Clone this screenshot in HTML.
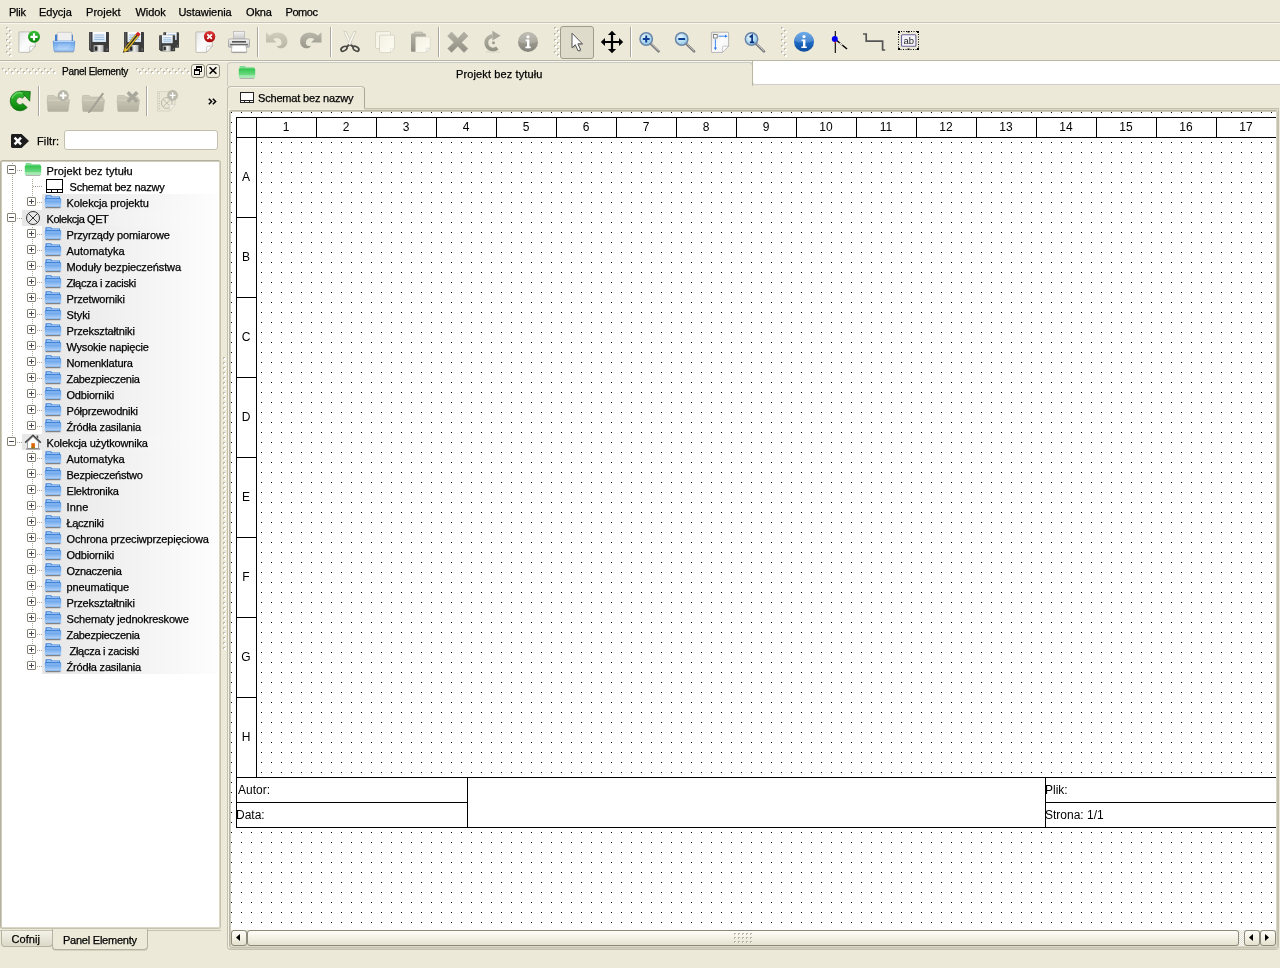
<!DOCTYPE html>
<html lang="pl"><head><meta charset="utf-8"><title>QElectroTech</title>
<style>
html,body{margin:0;padding:0}
body{will-change:transform;width:1280px;height:968px;overflow:hidden;background:#ECE9D8;position:relative;font-family:"Liberation Sans",sans-serif;font-size:11px;color:#000}
.a{position:absolute}
.t{position:absolute;white-space:pre;line-height:13px;height:13px;-webkit-text-stroke:.25px #000}
.hl{position:absolute;height:1px}
.vl{position:absolute;width:1px}
svg{position:absolute;overflow:visible}
.ic{position:absolute;width:22px;height:22px}
.grad{position:absolute;height:16px;background:linear-gradient(90deg,#E7E7E7,#FDFDFD)}
.exp{position:absolute;width:7px;height:7px;border:1px solid #858275;background:#fff;border-radius:1px}
.exp i{position:absolute;left:1px;top:3px;width:5px;height:1px;background:#4A4A4A}
.exp b{position:absolute;left:3px;top:1px;width:1px;height:5px;background:#4A4A4A}
.hd{position:absolute;height:1px;background-image:linear-gradient(90deg,#A8A594 1px,transparent 1px);background-size:2px 1px}
.vd{position:absolute;width:1px;background-image:linear-gradient(#A8A594 1px,transparent 1px);background-size:1px 2px}
.sep{position:absolute;width:1px;background:#ACA899;box-shadow:1px 0 0 #fff}
</style></head><body>
<div class="t" style="left:9px;top:6px;letter-spacing:-0.280px">Plik</div>
<div class="t" style="left:39px;top:6px;letter-spacing:-0.039px">Edycja</div>
<div class="t" style="left:86px;top:6px;letter-spacing:0.050px">Projekt</div>
<div class="t" style="left:135.5px;top:6px;letter-spacing:-0.093px">Widok</div>
<div class="t" style="left:178.5px;top:6px;letter-spacing:-0.071px">Ustawienia</div>
<div class="t" style="left:246px;top:6px;letter-spacing:-0.178px">Okna</div>
<div class="t" style="left:285.5px;top:6px;letter-spacing:-0.430px">Pomoc</div>
<div class="hl" style="left:0;top:22px;width:1280px;background:#C9C6B6"></div>
<div class="hl" style="left:0;top:23px;width:1280px;background:#F8F7F1"></div>
<div class="hl" style="left:0;top:60px;width:1280px;background:#B9B6A5"></div>
<div class="hl" style="left:0;top:61px;width:1280px;background:#F6F5EE"></div>
<svg style="left:6px;top:27px;width:6px;height:30px" shape-rendering="crispEdges"><rect width="6" height="30" fill="url(#hp)"/></svg>
<svg style="left:554px;top:27px;width:6px;height:30px" shape-rendering="crispEdges"><rect width="6" height="30" fill="url(#hp)"/></svg>
<svg style="left:781px;top:27px;width:6px;height:30px" shape-rendering="crispEdges"><rect width="6" height="30" fill="url(#hp)"/></svg>
<div class="sep" style="left:257px;top:27px;height:30px"></div>
<div class="sep" style="left:330px;top:27px;height:30px"></div>
<div class="sep" style="left:438px;top:27px;height:30px"></div>
<div class="sep" style="left:630px;top:27px;height:30px"></div>
<div class="a" style="left:560px;top:26px;width:32px;height:31px;border:1px solid #A09D8D;border-radius:3px;background:#DEDBCA"></div>
<svg width="0" height="0" style="left:0;top:0"><defs>
<linearGradient id="gpage" x1="0" y1="0" x2="1" y2="1"><stop offset="0" stop-color="#E4E4E4"/><stop offset=".5" stop-color="#FCFCFC"/><stop offset="1" stop-color="#F2F2F2"/></linearGradient>
<linearGradient id="ggreen" x1="0" y1="0" x2="0" y2="1"><stop offset="0" stop-color="#35C235"/><stop offset="1" stop-color="#078007"/></linearGradient>
<linearGradient id="gred" x1="0" y1="0" x2="0" y2="1"><stop offset="0" stop-color="#E03A3A"/><stop offset="1" stop-color="#A80808"/></linearGradient>
<linearGradient id="gblue" x1="0" y1="0" x2="0" y2="1"><stop offset="0" stop-color="#5E9BE6"/><stop offset=".75" stop-color="#A4CBF7"/><stop offset="1" stop-color="#85B6F0"/></linearGradient>
<linearGradient id="gfold" x1="0" y1="0" x2="0" y2="1"><stop offset="0" stop-color="#4C8FE3"/><stop offset=".8" stop-color="#A3CBF7"/><stop offset="1" stop-color="#82B4F0"/></linearGradient>
<linearGradient id="ggfold" x1="0" y1="0" x2="0" y2="1"><stop offset="0" stop-color="#2FC24B"/><stop offset=".7" stop-color="#6FDB85"/><stop offset=".75" stop-color="#A5E8B2"/><stop offset="1" stop-color="#A5E8B2"/></linearGradient>
<linearGradient id="gmetal" x1="0" y1="0" x2="1" y2="0"><stop offset="0" stop-color="#8C8C8C"/><stop offset=".6" stop-color="#E8E8E8"/><stop offset="1" stop-color="#B0B0B0"/></linearGradient>
<linearGradient id="glabel" x1="0" y1="0" x2="0" y2="1"><stop offset="0" stop-color="#FFFFFF"/><stop offset="1" stop-color="#D4E4F4"/></linearGradient>
<linearGradient id="gdis" x1="0" y1="0" x2="0" y2="1"><stop offset="0" stop-color="#CFCCBB"/><stop offset="1" stop-color="#B3B0A0"/></linearGradient>
<linearGradient id="gdis2" x1="0" y1="0" x2="0" y2="1"><stop offset="0" stop-color="#B5B3A6"/><stop offset="1" stop-color="#918F83"/></linearGradient>
<linearGradient id="gprn" x1="0" y1="0" x2="0" y2="1"><stop offset="0" stop-color="#F4F4F4"/><stop offset="1" stop-color="#BDBDBD"/></linearGradient>
<radialGradient id="glens" cx=".4" cy=".35" r=".7"><stop offset="0" stop-color="#E6F6FC"/><stop offset="1" stop-color="#8CC8E8"/></radialGradient>
<linearGradient id="ginfo" x1="0" y1="0" x2="0" y2="1"><stop offset="0" stop-color="#4A97E4"/><stop offset=".5" stop-color="#1F6CC6"/><stop offset="1" stop-color="#0C4A9C"/></linearGradient>
<linearGradient id="ginfog" x1="0" y1="0" x2="0" y2="1"><stop offset="0" stop-color="#B4B2A6"/><stop offset=".5" stop-color="#9A988C"/><stop offset="1" stop-color="#86847A"/></linearGradient>
<linearGradient id="gcream" x1="0" y1="0" x2="1" y2="1"><stop offset="0" stop-color="#F3F1E2"/><stop offset="1" stop-color="#FEFDF4"/></linearGradient>
<pattern id="hp" width="6" height="6" patternUnits="userSpaceOnUse"><rect x="0" y="0" width="2" height="2" fill="#BDBAA9"/><rect x="1" y="1" width="2" height="2" fill="#fff"/><rect x="3" y="3" width="2" height="2" fill="#BDBAA9"/><rect x="4" y="4" width="2" height="2" fill="#fff"/></pattern>
<pattern id="gp" width="3" height="5" patternUnits="userSpaceOnUse"><rect x="0" y="0" width="2" height="2" fill="#BDBAA9"/><rect x="1" y="1" width="2" height="2" fill="#fff"/></pattern>
<pattern id="sg" width="4" height="4" patternUnits="userSpaceOnUse" x="503" y="3"><path d="M0 0h2v1h-1v1h-1z" fill="#B9B6A8"/><rect x="1" y="1" width="1" height="1" fill="#fff"/></pattern>
<g id="fold"><path d="M1.5 1.2h5.6l1.2 1.3H16v3H1.5z" fill="#3E82DC"/><path d="M2.6 2.1h4l.8 1H15v1.5H2.6z" fill="#8DBBF2"/><path d="M1.3 4.4h15.4q.5 0 .5.5v7.7q0 .6-.6.6H1.4q-.6 0-.6-.6V4.9q0-.5.5-.5z" fill="url(#gfold)"/><path d="M1.5 4.9h15" stroke="#2F74D0" stroke-width=".9"/><path d="M1.6 5.9h14.8" stroke="#B5D5F8" stroke-width=".8"/><path d="M1.6 13.7h14.8" stroke="#6E6E6E" stroke-width="1"/></g>
<g id="gfolder"><path d="M.5 6.2q0-.7.7-.7h6l1.5 1.6h11.6q.7 0 .7.7v1.7h1q.6 0 .5.6L21.2 20.8q-.1.7-.8.7H1.6q-.7 0-.8-.7L.1 10.1q0-.6.4-.6z" fill="url(#gdis)" stroke="#B9B6A6" stroke-width=".6"/><path d="M1.2 10.2h19.8" stroke="#DAD7C8" stroke-width=".8"/></g>
<g id="floppy"><path d="M1.6 1h18.8q.6 0 .6.6v18.8q0 .6-.6.6H3.2L1 18.8V1.6q0-.6.6-.6z" fill="#3C3C3C"/><path d="M1.6 1.6h1.5v17l-1.5-1.4z" fill="#5A5A5A"/><rect x="4.5" y="1" width="13.5" height="10" fill="url(#glabel)"/><path d="M6.3 4h10M6.3 6.2h10M6.3 8.4h10" stroke="#8FB2D6" stroke-width=".9"/><rect x="5.5" y="14" width="10" height="7" fill="url(#gmetal)"/><rect x="6.8" y="15.5" width="2.6" height="4.2" fill="#2A2A2A"/><rect x="18.6" y="17.5" width="1" height="2" fill="#8A8A8A"/></g>
<g id="lens"><path d="M12.6 12.6L20.6 20.4" stroke="#7C7C7C" stroke-width="2.6" stroke-linecap="round"/><path d="M12.9 12.2L20.4 19.6" stroke="#C9C9C9" stroke-width="1" stroke-linecap="round"/><circle cx="8.2" cy="8" r="6.2" fill="url(#glens)" stroke="#6C86A8" stroke-width="1.5"/></g>
<g id="page"><path d="M.9 1.4q0-.5.5-.5h15.4q.5 0 .5.5v13.9l-6 6.1H1.4q-.5 0-.5-.5z" fill="url(#gpage)" stroke="#B4B2AA" stroke-width=".8"/><path d="M17.2 15.2h-4.6q-.9 0-.9.9l-.2 5.2z" fill="#fff" stroke="#B4B2AA" stroke-width=".6"/></g>
</defs></svg>
<svg class="ic" style="left:18px;top:31px" viewBox="0 0 22 22"><use href="#page"/><circle cx="16" cy="5.8" r="6" fill="url(#ggreen)"/><path d="M16 2.2v7.2M12.4 5.8h7.2" stroke="#fff" stroke-width="2.2"/></svg>
<svg class="ic" style="left:53px;top:31px" viewBox="0 0 22 22"><path d="M2 4.400q0-.8.8-.8h2v7h-2.800zM17.200 3.600h2q.8 0 .8.800v6.200h-2.800z" fill="#3B7BD4"/><rect x="4.400" y="1.300" width="14.400" height="10.500" rx=".8" fill="#EFEFEF" stroke="#BDBDBD" stroke-width=".7"/><path d="M.8 10h20.400q.7 0 .6.700l-.9 9.200q-.1.700-.8.700H1.900q-.7 0-.8-.7L.2 10.700q-.1-.700.6-.700z" fill="url(#gblue)" stroke="#4484DA" stroke-width=".6"/><path d="M1 10.600h20" stroke="#CFE3FA" stroke-width=".9"/><path d="M5 12.500h13.500l-3.500 6.500H5z" fill="#fff" opacity=".16"/><path d="M1.200 21h19.600" stroke="#A5A5A5" stroke-width=".8"/></svg>
<svg class="ic" style="left:88px;top:31px" viewBox="0 0 22 22"><use href="#floppy"/></svg>
<svg class="ic" style="left:123px;top:31px" viewBox="0 0 22 22"><use href="#floppy"/><path d="M.2 21.6l1.2-4.2L12.6 3.2l3 2.4L4.2 19.8z" fill="#F2C62A" stroke="#6A5212" stroke-width=".5"/><path d="M2.8 17.2L13.8 3.6l1 .8L3.8 18z" fill="#2A2A2A"/><path d="M12.6 3.2l1.4-1.8q.6-.7 1.4-.2l1.6 1.3q.7.6.1 1.4l-1.5 1.7z" fill="#D92020"/><path d="M.2 21.6l.5-1.8 1 .9z" fill="#222"/></svg>
<svg class="ic" style="left:158px;top:31px" viewBox="0 0 22 22"><g transform="translate(4.6 .4) scale(.78)"><use href="#floppy"/></g><g transform="translate(.3 3.4) scale(.8)"><use href="#floppy"/></g></svg>
<svg class="ic" style="left:193px;top:31px" viewBox="0 0 22 22"><g transform="translate(2 0)"><use href="#page"/></g><circle cx="16.600" cy="5.600" r="5.700" fill="url(#gred)"/><path d="M14.300 3.300l4.600 4.600M18.900 3.300l-4.600 4.600" stroke="#fff" stroke-width="1.800"/></svg>
<svg class="ic" style="left:228px;top:31px" viewBox="0 0 22 22"><rect x="5.6" y=".6" width="10.8" height="9" fill="url(#gprn)" stroke="#B0B0B0" stroke-width=".7"/><path d="M1.6 8h18.8q1.1 0 1.1 1.1v6.3q0 .8-.8.8H1.3q-.8 0-.8-.8V9.1Q.5 8 1.6 8z" fill="url(#gprn)" stroke="#9A9A9A" stroke-width=".7"/><rect x="4" y="10" width="14" height="1.6" fill="#555"/><path d="M4.2 14h13.6l1 7q.1.6-.6.6H3.8q-.7 0-.6-.6z" fill="#fff" stroke="#A8A8A8" stroke-width=".7"/><path d="M3.6 21.2h14.8" stroke="#8E8E8E" stroke-width=".9"/><rect x="2" y="13" width="18" height="1.2" fill="#6A6A6A"/></svg>
<svg class="ic" style="left:265px;top:31px" viewBox="0 0 22 22"><path d="M1 1.2L1 11.4L11.4 11.4L8.2 8.2C11.6 5.6 16.8 7.6 16.6 12.2C16.4 15 13.6 15.6 11.4 14.4C13.4 19.2 22.4 18.2 22.4 10.2C22.4 2.2 11.6-1.4 4.6 4.6Z" fill="url(#gdis)" opacity=".9"/></svg>
<svg class="ic" style="left:300px;top:31px" viewBox="0 0 22 22"><g transform="translate(22.5 0) scale(-1 1)"><path d="M1 1.2L1 11.4L11.4 11.4L8.2 8.2C11.6 5.6 16.8 7.6 16.6 12.2C16.4 15 13.6 15.6 11.4 14.4C13.4 19.2 22.4 18.2 22.4 10.2C22.4 2.2 11.6-1.4 4.6 4.6Z" fill="url(#gdis2)" opacity=".9"/></g></svg>
<svg class="ic" style="left:338px;top:31px" viewBox="0 0 22 22"><path d="M5.800 .400h2.200l6.400 13.200l-2.200 1.200z" fill="#FBFAF4" stroke="#BFBCAB" stroke-width=".6"/><path d="M18 .400h-2.200l-6.400 13.200l2.200 1.200z" fill="#FBFAF4" stroke="#BFBCAB" stroke-width=".6"/><ellipse cx="6" cy="17.700" rx="3.300" ry="2" transform="rotate(-32 6 17.700)" fill="none" stroke="#4A4A46" stroke-width="1.700"/><ellipse cx="17.900" cy="17.700" rx="3.300" ry="2" transform="rotate(32 17.900 17.700)" fill="none" stroke="#4A4A46" stroke-width="1.700"/><path d="M8.600 15.800L11.400 13.900M15.300 15.800L12.500 13.900" stroke="#4A4A46" stroke-width="1.900"/></svg>
<svg class="ic" style="left:373px;top:31px" viewBox="0 0 22 22"><rect x="2.500" y=".600" width="15" height="17" rx="1.200" fill="url(#gcream)" stroke="#D2CFBE" stroke-width=".8"/><path d="M6.500 5q0-.9.900-.9h13.200q.9 0 .9.900v12.400l-4 4.200H7.400q-.9 0-.9-.9z" fill="url(#gcream)" stroke="#D2CFBE" stroke-width=".8"/><path d="M21.300 17.400h-3q-.8 0-.8.800v3.200z" fill="#fff" stroke="#D2CFBE" stroke-width=".5"/></svg>
<svg class="ic" style="left:408px;top:31px" viewBox="0 0 22 22"><path d="M3.800 2.600h13.200q.8 0 .8.800V20q0 .8-.8.800H3.800q-.8 0-.8-.8V3.400q0-.8.8-.8z" fill="url(#gdis2)"/><path d="M6.800 1h7.200q.6 0 .6.600v2H6.200v-2q0-.6.600-.6z" fill="#C9C7BA" stroke="#A3A195" stroke-width=".5"/><path d="M7.600 6.600q0-.8.800-.8h13q.8 0 .8.800v10.600l-4 4.200H8.400q-.8 0-.8-.8z" fill="url(#gcream)" stroke="#D2CFBE" stroke-width=".6"/><path d="M22 17.200h-3q-.8 0-.8.800v3.200z" fill="#fff" stroke="#C2BFAE" stroke-width=".5"/></svg>
<svg class="ic" style="left:446px;top:31px" viewBox="0 0 22 22"><path d="M5.6 1L11.8 7.4L18 1L22 5L15.6 11.4L22 17.6L18 21.6L11.8 15.2L5.6 21.6L1.6 17.6L8 11.4L1.6 5Z" fill="url(#gdis2)" stroke="#A9A79A" stroke-width=".5"/></svg>
<svg class="ic" style="left:481px;top:31px" viewBox="0 0 22 22"><path d="M11.400 3.200A8.600 8.600 0 1 0 17.500 18.400L15.150 15.550A4.900 4.900 0 1 1 11.400 6.900Z" fill="url(#gdis2)"/><path d="M11.400 -.200L19.600 4.800L11.400 9.600Z" fill="#ABA99C"/><circle cx="12.500" cy="11.700" r="1.500" fill="#9C9A8E"/><path d="M5 21h14" stroke="#D3D0BF" stroke-width=".9"/></svg>
<svg class="ic" style="left:516px;top:31px" viewBox="0 0 22 22"><circle cx="12" cy="11" r="10" fill="url(#ginfog)"/><path d="M2.4 11a9.6 9.6 0 0 1 19.2 0q-9.6 3-19.2 0z" fill="#fff" opacity=".18"/><circle cx="12" cy="5.8" r="1.6" fill="#fff"/><path d="M9.6 8.6h3.8v7h1.4v1.6H9.4v-1.6h1.6v-5.4H9.6z" fill="#fff"/></svg>
<svg class="ic" style="left:565px;top:31px" viewBox="0 0 22 22"><path d="M8.200 3.800V18L11.400 15L14 21L16.600 19.900L14 14H18.400z" fill="#777" opacity=".45"/><path d="M7 2.200V16.800L10.300 13.700L13 19.900L15.600 18.800L12.900 12.800H17.400z" fill="#fff" stroke="#555" stroke-width="1" stroke-linejoin="round"/></svg>
<svg class="ic" style="left:600px;top:31px" viewBox="0 0 22 22"><path d="M12 -.200L16.100 4H13.100V9.900H19V6.900L23.200 11L19 15.100V12.100H13.100V18H16.100L12 22.200L7.900 18H10.900V12.100H5V15.100L.800 11L5 6.900V9.900H10.900V4H7.900Z" fill="#000"/></svg>
<svg class="ic" style="left:638px;top:31px" viewBox="0 0 22 22"><use href="#lens"/><path d="M8.2 4.6v6.800M4.800 8h6.800" stroke="#0E3F94" stroke-width="2"/></svg>
<svg class="ic" style="left:673px;top:31px" viewBox="0 0 22 22"><g transform="translate(.5 0)"><use href="#lens"/><path d="M4.800 8h6.800" stroke="#0E3F94" stroke-width="2"/></g></svg>
<svg class="ic" style="left:708px;top:31px" viewBox="0 0 22 22"><path d="M3.400 1.800q0-.6.600-.6h16q.6 0 .6.600v13.400l-6.200 6.200H4q-.6 0-.6-.6z" fill="url(#gpage)" stroke="#A6A6A6" stroke-width=".8"/><path d="M20.600 15.200h-5.200q-.8 0-.8.800l-.2 5.400z" fill="#fff" stroke="#A6A6A6" stroke-width=".6"/><rect x="5.600" y="3.400" width="3.600" height="3.600" fill="#fff" stroke="#777" stroke-width=".9"/><path d="M10.400 5.200h7.600M7.400 8.200v9.600" stroke="#3C8CF0" stroke-width="1"/><path d="M17 3.600l2.600 1.600L17 6.800zM5.800 16.600l1.600 2.600l1.600-2.600z" fill="#2E7CE8"/></svg>
<svg class="ic" style="left:743px;top:31px" viewBox="0 0 22 22"><g transform="translate(.3 0)"><use href="#lens"/><path d="M6.400 6.200L8.800 4.400V11.400M6.600 11.400h4.400" stroke="#0B2F80" stroke-width="1.700" fill="none"/></g></svg>
<svg class="ic" style="left:792px;top:31px" viewBox="0 0 22 22"><circle cx="12" cy="10.8" r="10" fill="url(#ginfo)"/><path d="M2.6 10a9.4 9.4 0 0 1 18.8 0q-9.4 3.4-18.8 0z" fill="#fff" opacity=".2"/><circle cx="12" cy="5.6" r="1.6" fill="#fff"/><path d="M9.6 8.4h3.8v7h1.4v1.6H9.4v-1.6h1.6V10H9.6z" fill="#fff"/></svg>
<svg class="ic" style="left:827px;top:31px" viewBox="0 0 22 22"><path d="M8.300 0v22" stroke="#000" stroke-width="1.100"/><path d="M8 8L20 18" stroke="#000" stroke-width="1.500"/><path d="M12.600 11.800L15.400 14.200" stroke="#fff" stroke-width="1.100"/><circle cx="7.800" cy="8" r="3" fill="#0000F0"/><rect x="7.800" y="10.600" width=".9" height="1.600" fill="#F00"/></svg>
<svg class="ic" style="left:862px;top:31px" viewBox="0 0 22 22"><path d="M1 3H4.200V10.200H20.600V19H23.200" fill="none" stroke="#555" stroke-width="1.700"/></svg>
<svg class="ic" style="left:897px;top:31px" viewBox="0 0 22 22"><rect x="1.500" y=".500" width="20" height="18" fill="none" stroke="#000" stroke-width="1" stroke-dasharray="1 1.500"/><path d="M1 0h2v2H1zM20 0h2v2h-2zM1 17h2v2H1zM20 17h2v2h-2zM10.500 0h2v1.500h-2zM10.500 17.500h2V19h-2z" fill="#000"/><rect x="4.500" y="3.800" width="14.400" height="11.400" rx="1" fill="#F4F4FA" stroke="#6C6698" stroke-width="1.100"/><text x="11.700" y="12.800" font-size="9.500" text-anchor="middle" font-family="Liberation Sans,sans-serif" fill="#222">ab</text></svg>
<svg style="left:2px;top:68px;width:54px;height:6px" shape-rendering="crispEdges"><rect width="54" height="6" fill="url(#hp)"/></svg>
<svg style="left:136px;top:68px;width:54px;height:6px" shape-rendering="crispEdges"><rect width="54" height="6" fill="url(#hp)"/></svg>
<div class="t" style="left:62px;top:65px;letter-spacing:-0.282px;font-size:10px">Panel Elementy</div>
<div class="a" style="left:191px;top:64px;width:14px;height:14px;box-sizing:border-box;border:1px solid #8F8C7D;border-radius:3px;background:linear-gradient(#F9F8EE,#ECE9D8)"></div>
<div class="a" style="left:206px;top:64px;width:14px;height:14px;box-sizing:border-box;border:1px solid #8F8C7D;border-radius:3px;background:linear-gradient(#F9F8EE,#ECE9D8)"></div>
<svg style="left:191px;top:64px;width:14px;height:14px" viewBox="0 0 14 14" shape-rendering="crispEdges"><path d="M5.500 2.500h5v5h-5z" fill="none" stroke="#000"/><path d="M5 3h6" stroke="#000" stroke-width="2"/><path d="M3.500 5.500h5v5h-5z" fill="#F6F4E8" stroke="#000"/><path d="M3 6h6" stroke="#000" stroke-width="2"/></svg>
<svg style="left:206px;top:64px;width:14px;height:14px" viewBox="0 0 14 14"><path d="M3.600 3.200l6.800 6.600M10.400 3.200l-6.800 6.600" stroke="#000" stroke-width="1.600"/></svg>
<div class="sep" style="left:38px;top:86px;height:30px"></div>
<div class="sep" style="left:146px;top:86px;height:30px"></div>
<svg class="ic" style="left:9px;top:90px" viewBox="0 0 22 22"><path d="M17.56 3.72A9.8 9.8 0 1 0 18.28 17.56L13.75 13.48A3.7 3.7 0 1 1 13.48 8.25Z" fill="url(#ggreen)" stroke="#0B620B" stroke-width=".7"/><path d="M11.800 1.100L21.300 1.500L20.700 11.200Z" fill="#1E9E1E" stroke="#0B620B" stroke-width=".7" stroke-linejoin="round"/><path d="M3 8.500A8.300 8.300 0 0 1 14 3.200" fill="none" stroke="#7FE07F" stroke-width="1.400" opacity=".7"/></svg>
<svg class="ic" style="left:47px;top:90px" viewBox="0 0 22 22"><use href="#gfolder"/><circle cx="16.200" cy="5.600" r="5.600" fill="#B8B6A8"/><path d="M16.200 2.200v6.800M12.800 5.600h6.800" stroke="#fff" stroke-width="2"/></svg>
<svg class="ic" style="left:82px;top:90px" viewBox="0 0 22 22"><use href="#gfolder"/><path d="M6.600 21.400L20.400 2.600L22 3.800L8.200 22.400z" fill="#A3A195"/><path d="M6.600 21.400l-.6 1.600 1.800-.6z" fill="#77756B"/></svg>
<svg class="ic" style="left:117px;top:90px" viewBox="0 0 22 22"><use href="#gfolder"/><path d="M12 1L15.400 4.400L19 1L21.600 3.400L18 7L21.600 10.600L19 13L15.400 9.600L12 13L9.600 10.600L13 7L9.600 3.400Z" fill="#A9A79B"/></svg>
<svg class="ic" style="left:156px;top:90px" viewBox="0 0 22 22"><path d="M1.600 1.600h13l4.600 0v13l-5.600 6.400h-12z" fill="#E9E6D6" stroke="#D2CFBE" stroke-width=".8"/><path d="M3.400 3v16" stroke="#BDBAAA" stroke-width="1" stroke-dasharray="1 1.500"/><circle cx="10.800" cy="13" r="5.400" fill="none" stroke="#BDBAA9" stroke-width="1"/><path d="M7 9.200l7.600 7.600M14.600 9.200L7 16.800" stroke="#BDBAA9" stroke-width="1"/><path d="M13.600 21l5.600-6.400h-4.600q-1 0-1 1z" fill="#F3F1E6" stroke="#D2CFBE" stroke-width=".6"/><circle cx="16.600" cy="5.400" r="5" fill="#BDBBAE" stroke="#AFAD9F" stroke-width=".6"/><path d="M16.600 2.400v6M13.600 5.400h6" stroke="#fff" stroke-width="1.400"/></svg>
<svg style="left:208px;top:98px;width:9px;height:7px" viewBox="0 0 9 7"><path d="M0.8 0.7L3.6 3.5L0.8 6.3M4.8 0.7L7.6 3.5L4.8 6.3" fill="none" stroke="#000" stroke-width="1.5"/></svg>
<svg style="left:10px;top:133px;width:20px;height:16px" viewBox="0 0 20 16"><path d="M2.400 1H11.600L19 8L11.600 15H2.400Q1 15 1 13.600V2.400Q1 1 2.400 1Z" fill="#1C1C1C"/><path d="M4.600 4.600L11 11.400M11 4.600L4.600 11.400" stroke="#fff" stroke-width="2.400"/></svg>
<div class="t" style="left:37px;top:135px;letter-spacing:0.121px">Filtr:</div>
<div class="a" style="left:64px;top:130px;width:152px;height:18px;border:1px solid #C2BFAE;border-radius:3px;background:#fff"></div>
<div class="a" style="left:0;top:160px;width:221px;height:769px;box-sizing:border-box;border:1px solid #B5B1A0;border-right-color:#C5C2B0;border-bottom-color:#C5C2B0;border-radius:3px;background:#CFCCBA"></div>
<div class="a" style="left:1px;top:161px;width:219px;height:767px;box-sizing:border-box;border:1px solid #CFCCBA;border-right-color:#DAD7C6;border-bottom-color:#DAD7C6;border-radius:2px;background:#fff"></div>
<div class="hl" style="left:0;top:930px;width:53px;background:#C5C2B0"></div>
<div class="hl" style="left:147px;top:930px;width:74px;background:#C5C2B0"></div>
<div class="vd" style="left:12px;top:163px;height:280px"></div>
<div class="vd" style="left:32px;top:179px;height:22px"></div>
<div class="vd" style="left:32px;top:227px;height:200px"></div>
<div class="vd" style="left:32px;top:451px;height:216px"></div>
<div class="hd" style="left:17px;top:170px;width:6px"></div><div class="exp" style="left:7px;top:165px"><i></i></div><svg style="left:24px;top:162px;width:18px;height:16px" viewBox="0 0 18 16"><path d="M1.600 1.600q0-.6.600-.6h4.600l1.200 1.200h7.800q.6 0 .6.600v2H1.600z" fill="#7FDD92"/><path d="M1.400 3.400h15.200q.6 0 .6.600v8.400q0 .6-.6.600H1.400q-.6 0-.6-.6V4q0-.6.600-.6z" fill="url(#ggfold)"/><path d="M1.800 13.500h14.400" stroke="#A9A9A9" stroke-width=".9"/></svg><div class="t" style="left:46.5px;top:165px;letter-spacing:0.103px">Projekt bez tytułu</div>
<div class="hd" style="left:33px;top:186px;width:9px"></div><svg style="left:46px;top:178px;width:18px;height:16px" viewBox="0 0 18 16"><path d="M.5 1.500h16v13h-16zM.5 11.500h16M5.700 11.500v3M11 11.500v3" fill="#fff" stroke="#000" stroke-width="1" shape-rendering="crispEdges"/></svg><div class="t" style="left:69.5px;top:181px;letter-spacing:-0.194px">Schemat bez nazwy</div>
<div class="grad" style="left:42px;top:194px;width:176px"></div><div class="hd" style="left:37px;top:202px;width:5px"></div><div class="exp" style="left:27px;top:197px"><i></i><b></b></div><svg style="left:44px;top:194px;width:18px;height:16px" viewBox="0 0 18 16"><use href="#fold"/></svg><div class="t" style="left:66.5px;top:197px;letter-spacing:-0.095px">Kolekcja projektu</div>
<div class="grad" style="left:22px;top:210px;width:196px"></div><div class="hd" style="left:17px;top:218px;width:6px"></div><div class="exp" style="left:7px;top:213px"><i></i></div><svg style="left:24px;top:210px;width:18px;height:16px" viewBox="0 0 18 16"><circle cx="9" cy="8" r="6.500" fill="none" stroke="#333" stroke-width="1"/><path d="M4.400 3.400l9.200 9.200M13.600 3.400l-9.200 9.200" stroke="#333" stroke-width="1"/></svg><div class="t" style="left:46.5px;top:213px;letter-spacing:-0.448px">Kolekcja QET</div>
<div class="grad" style="left:42px;top:226px;width:176px"></div><div class="hd" style="left:37px;top:234px;width:5px"></div><div class="exp" style="left:27px;top:229px"><i></i><b></b></div><svg style="left:44px;top:226px;width:18px;height:16px" viewBox="0 0 18 16"><use href="#fold"/></svg><div class="t" style="left:66.5px;top:229px;letter-spacing:-0.136px">Przyrządy pomiarowe</div>
<div class="grad" style="left:42px;top:242px;width:176px"></div><div class="hd" style="left:37px;top:250px;width:5px"></div><div class="exp" style="left:27px;top:245px"><i></i><b></b></div><svg style="left:44px;top:242px;width:18px;height:16px" viewBox="0 0 18 16"><use href="#fold"/></svg><div class="t" style="left:66.5px;top:245px;letter-spacing:0.007px">Automatyka</div>
<div class="grad" style="left:42px;top:258px;width:176px"></div><div class="hd" style="left:37px;top:266px;width:5px"></div><div class="exp" style="left:27px;top:261px"><i></i><b></b></div><svg style="left:44px;top:258px;width:18px;height:16px" viewBox="0 0 18 16"><use href="#fold"/></svg><div class="t" style="left:66.5px;top:261px;letter-spacing:-0.112px">Moduły bezpieczeństwa</div>
<div class="grad" style="left:42px;top:274px;width:176px"></div><div class="hd" style="left:37px;top:282px;width:5px"></div><div class="exp" style="left:27px;top:277px"><i></i><b></b></div><svg style="left:44px;top:274px;width:18px;height:16px" viewBox="0 0 18 16"><use href="#fold"/></svg><div class="t" style="left:66.5px;top:277px;letter-spacing:-0.279px">Złącza i zaciski</div>
<div class="grad" style="left:42px;top:290px;width:176px"></div><div class="hd" style="left:37px;top:298px;width:5px"></div><div class="exp" style="left:27px;top:293px"><i></i><b></b></div><svg style="left:44px;top:290px;width:18px;height:16px" viewBox="0 0 18 16"><use href="#fold"/></svg><div class="t" style="left:66.5px;top:293px;letter-spacing:-0.142px">Przetworniki</div>
<div class="grad" style="left:42px;top:306px;width:176px"></div><div class="hd" style="left:37px;top:314px;width:5px"></div><div class="exp" style="left:27px;top:309px"><i></i><b></b></div><svg style="left:44px;top:306px;width:18px;height:16px" viewBox="0 0 18 16"><use href="#fold"/></svg><div class="t" style="left:66.5px;top:309px;letter-spacing:-0.069px">Styki</div>
<div class="grad" style="left:42px;top:322px;width:176px"></div><div class="hd" style="left:37px;top:330px;width:5px"></div><div class="exp" style="left:27px;top:325px"><i></i><b></b></div><svg style="left:44px;top:322px;width:18px;height:16px" viewBox="0 0 18 16"><use href="#fold"/></svg><div class="t" style="left:66.5px;top:325px;letter-spacing:-0.141px">Przekształtniki</div>
<div class="grad" style="left:42px;top:338px;width:176px"></div><div class="hd" style="left:37px;top:346px;width:5px"></div><div class="exp" style="left:27px;top:341px"><i></i><b></b></div><svg style="left:44px;top:338px;width:18px;height:16px" viewBox="0 0 18 16"><use href="#fold"/></svg><div class="t" style="left:66.5px;top:341px;letter-spacing:-0.208px">Wysokie napięcie</div>
<div class="grad" style="left:42px;top:354px;width:176px"></div><div class="hd" style="left:37px;top:362px;width:5px"></div><div class="exp" style="left:27px;top:357px"><i></i><b></b></div><svg style="left:44px;top:354px;width:18px;height:16px" viewBox="0 0 18 16"><use href="#fold"/></svg><div class="t" style="left:66.5px;top:357px;letter-spacing:-0.183px">Nomenklatura</div>
<div class="grad" style="left:42px;top:370px;width:176px"></div><div class="hd" style="left:37px;top:378px;width:5px"></div><div class="exp" style="left:27px;top:373px"><i></i><b></b></div><svg style="left:44px;top:370px;width:18px;height:16px" viewBox="0 0 18 16"><use href="#fold"/></svg><div class="t" style="left:66.5px;top:373px;letter-spacing:-0.278px">Zabezpieczenia</div>
<div class="grad" style="left:42px;top:386px;width:176px"></div><div class="hd" style="left:37px;top:394px;width:5px"></div><div class="exp" style="left:27px;top:389px"><i></i><b></b></div><svg style="left:44px;top:386px;width:18px;height:16px" viewBox="0 0 18 16"><use href="#fold"/></svg><div class="t" style="left:66.5px;top:389px;letter-spacing:-0.203px">Odbiorniki</div>
<div class="grad" style="left:42px;top:402px;width:176px"></div><div class="hd" style="left:37px;top:410px;width:5px"></div><div class="exp" style="left:27px;top:405px"><i></i><b></b></div><svg style="left:44px;top:402px;width:18px;height:16px" viewBox="0 0 18 16"><use href="#fold"/></svg><div class="t" style="left:66.5px;top:405px;letter-spacing:-0.186px">Półprzewodniki</div>
<div class="grad" style="left:42px;top:418px;width:176px"></div><div class="hd" style="left:37px;top:426px;width:5px"></div><div class="exp" style="left:27px;top:421px"><i></i><b></b></div><svg style="left:44px;top:418px;width:18px;height:16px" viewBox="0 0 18 16"><use href="#fold"/></svg><div class="t" style="left:66.5px;top:421px;letter-spacing:-0.166px">Źródła zasilania</div>
<div class="grad" style="left:22px;top:434px;width:196px"></div><div class="hd" style="left:17px;top:442px;width:6px"></div><div class="exp" style="left:7px;top:437px"><i></i></div><svg style="left:24px;top:434px;width:18px;height:16px" viewBox="0 0 18 16"><path d="M3.500 8v6.500h11V8L9 2.600z" fill="#fff" stroke="#8A8A8A" stroke-width=".8"/><path d="M1.200 8.600L9 1.200L16.800 8.600" fill="none" stroke="#444" stroke-width="1.500"/><path d="M12.600 1.600h1.600v3.200l-1.600-1.500z" fill="#555"/><rect x="7.300" y="9.200" width="3.600" height="5.400" fill="#DE6400"/><rect x="7.300" y="13.400" width="3.600" height="1" fill="#6E8A1E"/><path d="M2 15h14" stroke="#777" stroke-width=".9"/></svg><div class="t" style="left:46.5px;top:437px;letter-spacing:-0.165px">Kolekcja użytkownika</div>
<div class="grad" style="left:42px;top:450px;width:176px"></div><div class="hd" style="left:37px;top:458px;width:5px"></div><div class="exp" style="left:27px;top:453px"><i></i><b></b></div><svg style="left:44px;top:450px;width:18px;height:16px" viewBox="0 0 18 16"><use href="#fold"/></svg><div class="t" style="left:66.5px;top:453px;letter-spacing:0.007px">Automatyka</div>
<div class="grad" style="left:42px;top:466px;width:176px"></div><div class="hd" style="left:37px;top:474px;width:5px"></div><div class="exp" style="left:27px;top:469px"><i></i><b></b></div><svg style="left:44px;top:466px;width:18px;height:16px" viewBox="0 0 18 16"><use href="#fold"/></svg><div class="t" style="left:66.5px;top:469px;letter-spacing:-0.238px">Bezpieczeństwo</div>
<div class="grad" style="left:42px;top:482px;width:176px"></div><div class="hd" style="left:37px;top:490px;width:5px"></div><div class="exp" style="left:27px;top:485px"><i></i><b></b></div><svg style="left:44px;top:482px;width:18px;height:16px" viewBox="0 0 18 16"><use href="#fold"/></svg><div class="t" style="left:66.5px;top:485px;letter-spacing:-0.203px">Elektronika</div>
<div class="grad" style="left:42px;top:498px;width:176px"></div><div class="hd" style="left:37px;top:506px;width:5px"></div><div class="exp" style="left:27px;top:501px"><i></i><b></b></div><svg style="left:44px;top:498px;width:18px;height:16px" viewBox="0 0 18 16"><use href="#fold"/></svg><div class="t" style="left:66.5px;top:501px;letter-spacing:0.191px">Inne</div>
<div class="grad" style="left:42px;top:514px;width:176px"></div><div class="hd" style="left:37px;top:522px;width:5px"></div><div class="exp" style="left:27px;top:517px"><i></i><b></b></div><svg style="left:44px;top:514px;width:18px;height:16px" viewBox="0 0 18 16"><use href="#fold"/></svg><div class="t" style="left:66.5px;top:517px;letter-spacing:-0.319px">Łączniki</div>
<div class="grad" style="left:42px;top:530px;width:176px"></div><div class="hd" style="left:37px;top:538px;width:5px"></div><div class="exp" style="left:27px;top:533px"><i></i><b></b></div><svg style="left:44px;top:530px;width:18px;height:16px" viewBox="0 0 18 16"><use href="#fold"/></svg><div class="t" style="left:66.5px;top:533px;letter-spacing:-0.170px">Ochrona przeciwprzepięciowa</div>
<div class="grad" style="left:42px;top:546px;width:176px"></div><div class="hd" style="left:37px;top:554px;width:5px"></div><div class="exp" style="left:27px;top:549px"><i></i><b></b></div><svg style="left:44px;top:546px;width:18px;height:16px" viewBox="0 0 18 16"><use href="#fold"/></svg><div class="t" style="left:66.5px;top:549px;letter-spacing:-0.203px">Odbiorniki</div>
<div class="grad" style="left:42px;top:562px;width:176px"></div><div class="hd" style="left:37px;top:570px;width:5px"></div><div class="exp" style="left:27px;top:565px"><i></i><b></b></div><svg style="left:44px;top:562px;width:18px;height:16px" viewBox="0 0 18 16"><use href="#fold"/></svg><div class="t" style="left:66.5px;top:565px;letter-spacing:-0.312px">Oznaczenia</div>
<div class="grad" style="left:42px;top:578px;width:176px"></div><div class="hd" style="left:37px;top:586px;width:5px"></div><div class="exp" style="left:27px;top:581px"><i></i><b></b></div><svg style="left:44px;top:578px;width:18px;height:16px" viewBox="0 0 18 16"><use href="#fold"/></svg><div class="t" style="left:66.5px;top:581px;letter-spacing:-0.105px">pneumatique</div>
<div class="grad" style="left:42px;top:594px;width:176px"></div><div class="hd" style="left:37px;top:602px;width:5px"></div><div class="exp" style="left:27px;top:597px"><i></i><b></b></div><svg style="left:44px;top:594px;width:18px;height:16px" viewBox="0 0 18 16"><use href="#fold"/></svg><div class="t" style="left:66.5px;top:597px;letter-spacing:-0.141px">Przekształtniki</div>
<div class="grad" style="left:42px;top:610px;width:176px"></div><div class="hd" style="left:37px;top:618px;width:5px"></div><div class="exp" style="left:27px;top:613px"><i></i><b></b></div><svg style="left:44px;top:610px;width:18px;height:16px" viewBox="0 0 18 16"><use href="#fold"/></svg><div class="t" style="left:66.5px;top:613px;letter-spacing:-0.146px">Schematy jednokreskowe</div>
<div class="grad" style="left:42px;top:626px;width:176px"></div><div class="hd" style="left:37px;top:634px;width:5px"></div><div class="exp" style="left:27px;top:629px"><i></i><b></b></div><svg style="left:44px;top:626px;width:18px;height:16px" viewBox="0 0 18 16"><use href="#fold"/></svg><div class="t" style="left:66.5px;top:629px;letter-spacing:-0.278px">Zabezpieczenia</div>
<div class="grad" style="left:42px;top:642px;width:176px"></div><div class="hd" style="left:37px;top:650px;width:5px"></div><div class="exp" style="left:27px;top:645px"><i></i><b></b></div><svg style="left:44px;top:642px;width:18px;height:16px" viewBox="0 0 18 16"><use href="#fold"/></svg><div class="t" style="left:69.5px;top:645px;letter-spacing:-0.279px">Złącza i zaciski</div>
<div class="grad" style="left:42px;top:658px;width:176px"></div><div class="hd" style="left:37px;top:666px;width:5px"></div><div class="exp" style="left:27px;top:661px"><i></i><b></b></div><svg style="left:44px;top:658px;width:18px;height:16px" viewBox="0 0 18 16"><use href="#fold"/></svg><div class="t" style="left:66.5px;top:661px;letter-spacing:-0.166px">Źródła zasilania</div>
<svg style="left:223px;top:357px;width:3px;height:293px" shape-rendering="crispEdges"><rect width="3" height="293" fill="url(#gp)"/></svg>
<div class="a" style="left:1px;top:931px;width:52px;height:16px;border:1px solid #B5B2A0;border-top:none;border-radius:0 0 4px 4px;background:linear-gradient(#F4F2E8,#DCD9C8);box-sizing:border-box"></div>
<div class="a" style="left:52px;top:929px;width:96px;height:21px;border:1px solid #B5B2A0;border-top:none;border-radius:0 0 4px 4px;background:#ECE9D8;box-sizing:border-box;box-shadow:0 1px 0 #D5D2C0"></div>
<div class="t" style="left:11.5px;top:933px;letter-spacing:0.062px">Cofnij</div>
<div class="t" style="left:63px;top:934px;letter-spacing:-0.235px">Panel Elementy</div>
<div class="a" style="left:752px;top:61px;width:528px;height:23px;background:#fff;border-left:1px solid #BAB6A4;border-bottom:1px solid #CFCDC6;border-bottom-left-radius:3px"></div>
<div class="a" style="left:227px;top:62px;width:526px;height:24px;border:1px solid #CBCAC2;border-bottom:none;border-right-color:#BAB6A4;border-radius:4px 4px 0 0;box-sizing:border-box"></div>
<svg style="left:238px;top:65px;width:18px;height:16px" viewBox="0 0 18 16"><path d="M1.600 1.600q0-.6.600-.6h4.600l1.200 1.200h7.800q.6 0 .6.600v2H1.600z" fill="#7FDD92"/><path d="M1.400 3.400h15.200q.6 0 .6.600v8.400q0 .6-.6.600H1.400q-.6 0-.6-.6V4q0-.6.600-.6z" fill="url(#ggfold)"/><path d="M1.800 13.500h14.400" stroke="#A9A9A9" stroke-width=".9"/></svg>
<div class="t" style="left:456px;top:68px;letter-spacing:0.120px">Projekt bez tytułu</div>
<div class="a" style="left:227px;top:86px;width:138px;height:23px;border:1px solid #C0BDAB;border-bottom:none;border-right-color:#AAA796;border-radius:4px 4px 0 0;box-sizing:border-box;box-shadow:inset 0 1px 0 #F6F5EE"></div>
<svg style="left:239px;top:90px;width:18px;height:16px" viewBox="0 0 18 16"><path d="M1.500 2.500h13v10h-13zM1.500 10.500h13M5.700 10.500v2M10.200 10.500v2" fill="#fff" stroke="#222" stroke-width="1" shape-rendering="crispEdges"/></svg>
<div class="t" style="left:258px;top:92px;letter-spacing:-0.182px">Schemat bez nazwy</div>
<div class="a" style="left:227px;top:108px;width:1052px;height:842px;box-sizing:border-box;border:1px solid #C3C0AE;border-top:none;border-radius:0 0 4px 4px;box-shadow:inset 1px 0 0 #F4F2EA"></div>
<div class="hl" style="left:364px;top:108px;width:915px;background:#C3C0AE"></div>
<div class="hl" style="left:229px;top:109px;width:135px;background:#F1EFE4"></div>
<div class="hl" style="left:364px;top:109px;width:914px;background:#DAD7C6"></div>
<div class="hl" style="left:229px;top:948px;width:1049px;background:#D3D0BF"></div>
<div class="a" style="left:229px;top:110px;width:1049px;height:838px;box-sizing:border-box;border:1px solid #B9B5A3;border-right-color:#C6C3B1;border-bottom-color:#C6C3B1;border-radius:3px;background:#CFCCBA"></div>
<div class="a" style="left:230px;top:111px;width:1047px;height:836px;box-sizing:border-box;border:1px solid #CDCAB8;border-right-color:#DAD7C6;border-bottom-color:#DAD7C6;border-radius:2px;background:#fff"></div>
<svg style="left:231px;top:112px;width:1045px;height:818px;overflow:hidden" viewBox="0 0 1045 818" shape-rendering="crispEdges"><defs><pattern id="dg" width="10" height="10" patternUnits="userSpaceOnUse"><rect x="0" y="0" width="1" height="1" fill="#000"/></pattern></defs><rect width="1045" height="818" fill="#fff"/><rect width="1045" height="818" fill="url(#dg)"/><rect x="5" y="5" width="1040" height="20" fill="#fff"/><rect x="5" y="25" width="20" height="640" fill="#fff"/><rect x="5" y="665" width="1040" height="50" fill="#fff"/><path d="M5 5.500H1045M5 25.500H1045M5.500 5V715M25.500 5V665M5 665.500H1045M5 715.500H1045M5 690.500H236M814 690.500H1045M236.500 665V715M814.500 665V715M85.500 5V25M145.500 5V25M205.500 5V25M265.500 5V25M325.500 5V25M385.500 5V25M445.500 5V25M505.500 5V25M565.500 5V25M625.500 5V25M685.500 5V25M745.500 5V25M805.500 5V25M865.500 5V25M925.500 5V25M985.500 5V25M1045.500 5V25M5 105.500H25M5 185.500H25M5 265.500H25M5 345.500H25M5 425.500H25M5 505.500H25M5 585.500H25" fill="none" stroke="#000" stroke-width="1"/><g font-family="Liberation Sans,sans-serif" font-size="12" fill="#000" text-anchor="middle" shape-rendering="auto"><text x="55" y="19">1</text><text x="115" y="19">2</text><text x="175" y="19">3</text><text x="235" y="19">4</text><text x="295" y="19">5</text><text x="355" y="19">6</text><text x="415" y="19">7</text><text x="475" y="19">8</text><text x="535" y="19">9</text><text x="595" y="19">10</text><text x="655" y="19">11</text><text x="715" y="19">12</text><text x="775" y="19">13</text><text x="835" y="19">14</text><text x="895" y="19">15</text><text x="955" y="19">16</text><text x="1015" y="19">17</text><text x="15" y="69">A</text><text x="15" y="149">B</text><text x="15" y="229">C</text><text x="15" y="309">D</text><text x="15" y="389">E</text><text x="15" y="469">F</text><text x="15" y="549">G</text><text x="15" y="629">H</text></g><g font-family="Liberation Sans,sans-serif" font-size="12" fill="#000" shape-rendering="auto"><text x="7" y="682">Autor:</text><text x="5" y="707">Data:</text><text x="814" y="682">Plik:</text><text x="814" y="707">Strona: 1/1</text></g></svg>
<div class="a" style="left:231px;top:930px;width:1045px;height:16px;background:#E2DFCE"></div>
<div class="a" style="left:231px;top:930px;width:16px;height:16px;box-sizing:border-box;border:1px solid #8D8A7B;border-radius:3px;background:linear-gradient(#FEFDF8,#F3F1E4 50%,#E4E1CF)"></div>
<div class="a" style="left:247px;top:930px;width:992px;height:16px;box-sizing:border-box;border:1px solid #8D8A7B;border-radius:3px;background:linear-gradient(#FEFDF8,#F3F1E4 50%,#E4E1CF)"></div>
<div class="a" style="left:1239px;top:930px;width:5px;height:16px;background:repeating-conic-gradient(#fff 0 25%,#E3E0CF 0 50%) 0 0/2px 2px"></div>
<div class="a" style="left:1244px;top:930px;width:16px;height:16px;box-sizing:border-box;border:1px solid #8D8A7B;border-radius:3px;background:linear-gradient(#FEFDF8,#F3F1E4 50%,#E4E1CF)"></div>
<div class="a" style="left:1260px;top:930px;width:16px;height:16px;box-sizing:border-box;border:1px solid #8D8A7B;border-radius:3px;background:linear-gradient(#FEFDF8,#F3F1E4 50%,#E4E1CF)"></div>
<svg style="left:231px;top:930px;width:1045px;height:16px" viewBox="0 0 1045 16"><path d="M9 4v7l-4-3.500zM1022 4v7l-4-3.500zM1034 4v7l4-3.500z" fill="#000"/><g shape-rendering="crispEdges"><rect x="503" y="3" width="20" height="12" fill="url(#sg)"/></g></svg>
</body></html>
